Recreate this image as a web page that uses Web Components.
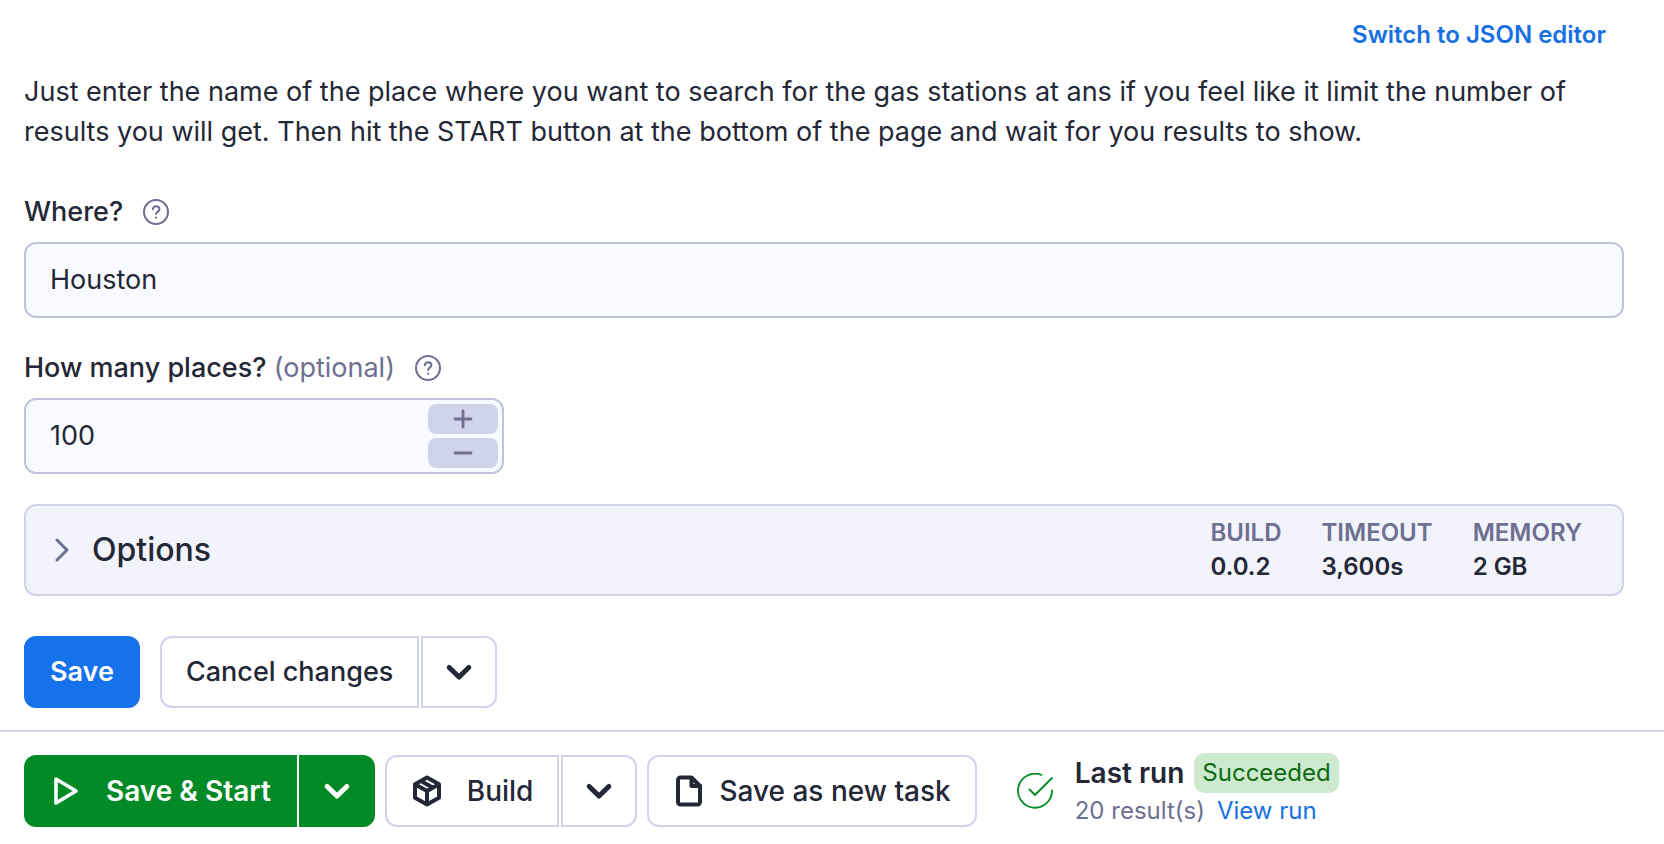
<!DOCTYPE html>
<html lang="en">
<head>
<meta charset="utf-8">
<title>Gas stations scraper - Input</title>
<style>
  :root {
    --text: #242736;
    --muted: #6e6f91;
    --link: #1670e2;
    --line: #d0d3ea;
    --field-line: #c0c3dd;
    --field-bg: #f8faff;
  }
  body {
    margin: 0;
    background: #fff;
    color: var(--text);
    font: 400 27px/40px Inter, sans-serif;
  }
</style>
</head>
<body>
<actor-input-page></actor-input-page>

<script>
const ICONS = {
  help: '<svg width="26" height="26" viewBox="0 0 26 26" fill="none" stroke="currentColor" stroke-width="2" stroke-linecap="round" stroke-linejoin="round"><circle cx="13" cy="13" r="12"/><path d="M9.8 10.200c.4-1.900 1.700-2.900 3.300-2.900 1.800 0 3.300 1.200 3.300 2.900 0 2.300-3.200 2.500-3.200 4.700"/><circle cx="13.100" cy="18.700" r=".5" stroke-width="1.200"/></svg>',
  right: '<svg width="16" height="26" viewBox="0 0 16 26" fill="none" stroke="currentColor" stroke-width="3" stroke-linecap="round" stroke-linejoin="round"><path d="M3 3 13 13 3 23"/></svg>',
  down: '<svg width="28" height="28" viewBox="0 0 28 28" fill="none" stroke="currentColor" stroke-width="5" stroke-linecap="round" stroke-linejoin="round"><path d="M4.200 9.500 14 19 23.800 9.500"/></svg>',
  play: '<svg width="28" height="32" viewBox="0 0 28 32" fill="none" stroke="currentColor" stroke-width="3.600" stroke-linejoin="round"><path d="M4 4 24 16 4 28Z"/></svg>',
  cube: '<svg width="30" height="32" viewBox="0 0 30 32" fill="none" stroke="currentColor" stroke-width="4" stroke-linecap="round" stroke-linejoin="round"><path d="M15 2.500 27 9.300v13.400L15 29.500 3 22.700V9.300ZM3.500 9.500 15 16l11.500-6.500M15 16v13M9 5.900l11.500 6.600"/></svg>',
  file: '<svg width="28" height="32" viewBox="0 0 28 32" fill="none" stroke="currentColor" stroke-width="4" stroke-linecap="round" stroke-linejoin="round"><path d="M16.500 2.500H5.500a2.500 2.500 0 0 0-2.500 2.500v22a2.500 2.500 0 0 0 2.500 2.500h17a2.500 2.500 0 0 0 2.500-2.500V11Z"/><path d="M16.500 3v8H25"/></svg>',
  check: '<svg width="36" height="36" viewBox="0 0 36 36" fill="none" stroke="currentColor" stroke-width="1.800" stroke-linecap="round" stroke-linejoin="round"><path d="M24.500 2A17 17 0 1 0 35 17.500"/><path d="M12.500 16.500 18 22 35 5"/></svg>',
  plus: '<svg width="20" height="20" viewBox="0 0 20 20" stroke="currentColor" stroke-width="2.800" stroke-linecap="round"><path d="M2 10h16M10 2v16"/></svg>',
  minus: '<svg width="20" height="20" viewBox="0 0 20 20" stroke="currentColor" stroke-width="2.800" stroke-linecap="round"><path d="M2 10h16"/></svg>'
};

class BaseElement extends HTMLElement {
  connectedCallback() {
    if (this.shadowRoot) return;
    this.attachShadow({ mode: 'open' }).innerHTML =
      `<style>*{box-sizing:border-box} svg{display:block;flex:none} button,input{font:inherit;color:inherit;margin:0} ${this.css()}</style>${this.html()}`;
    this.ready();
  }
  css() { return ''; }
  html() { return ''; }
  ready() {}
}

customElements.define('ui-icon', class extends BaseElement {
  css() { return ':host{display:inline-flex;justify-content:center;flex:none}'; }
  html() { return ICONS[this.getAttribute('name')]; }
});

customElements.define('ui-button', class extends BaseElement {
  css() {
    return `
    :host { display: block; --bg: #fff; --edge: var(--line); --ink: var(--text); --r: 12px; }
    :host([kind=primary]) { --bg: #1672eb; --edge: #1672eb; --ink: #fff; }
    :host([kind=success]) { --bg: #018a26; --edge: #018a26; --ink: #fff; }
    button {
      display: flex; align-items: center; justify-content: center;
      height: 72px; padding: 0 24px; border: 2px solid var(--edge); border-radius: var(--r);
      background: var(--bg); color: var(--ink); font-weight: 500; white-space: nowrap; cursor: pointer;
    }
    :host([kind=primary]) button, :host([kind=success]) button { font-weight: 600; }
    :host([joined=start]) button { border-radius: var(--r) 0 0 var(--r); }
    :host([joined=end]) button { border-radius: 0 var(--r) var(--r) 0; width: 76px; padding: 0; }
    ui-icon { width: 32px; margin-right: 24px; }
    :host([icon=file]) ui-icon { margin-right: 14px; }
    :host([icon=down]) ui-icon { margin: 0; }`;
  }
  html() {
    const icon = this.getAttribute('icon');
    const label = this.getAttribute('label');
    return `<button type="button"${label ? ` aria-label="${label}"` : ''}>${icon ? `<ui-icon name="${icon}"></ui-icon>` : ''}<slot></slot></button>`;
  }
});

customElements.define('split-button', class extends BaseElement {
  css() { return ':host{display:flex;gap:2px}'; }
  html() {
    const kind = this.getAttribute('kind') || 'plain';
    const icon = this.getAttribute('icon');
    return `<ui-button kind="${kind}" joined="start"${icon ? ` icon="${icon}"` : ''}><slot></slot></ui-button>
      <ui-button kind="${kind}" joined="end" icon="down" label="More actions"></ui-button>`;
  }
});

customElements.define('form-field', class extends BaseElement {
  css() {
    return `
    :host { display: block; }
    .head { display: flex; align-items: center; height: 40px; margin-bottom: 10px; }
    label { font-weight: 500; }
    .optional { color: var(--muted); font-weight: 400; }
    .help { display: flex; margin-left: 20px; padding: 0; border: 0; background: none; color: var(--muted); cursor: pointer; }
    .box {
      display: flex; height: 76px; border: 2px solid var(--field-line); border-radius: 12px;
      background: var(--field-bg);
    }
    .box.number { max-width: 480px; }
    input {
      flex: 1; min-width: 0; border: 0; border-radius: 12px; outline: 0; background: transparent;
      padding: 0 24px; appearance: textfield;
    }
    input::-webkit-inner-spin-button { appearance: none; margin: 0; }
    .steps { display: flex; flex-direction: column; gap: 4px; padding: 4px; }
    .steps button {
      flex: 1; width: 70px; display: flex; align-items: center; justify-content: center; padding: 0;
      border: 0; border-radius: 8px; background: #d0d4ea; color: var(--muted); cursor: pointer;
    }`;
  }
  html() {
    const number = this.getAttribute('type') === 'number';
    return `
      <div class="head">
        <label for="field"><slot></slot>${this.hasAttribute('optional') ? ' <span class="optional">(optional)</span>' : ''}</label>
        <button class="help" type="button" aria-label="Help"><ui-icon name="help"></ui-icon></button>
      </div>
      <div class="box${number ? ' number' : ''}">
        <input id="field" type="${number ? 'number' : 'text'}" value="${this.getAttribute('value')}">
        ${number ? `<div class="steps">
          <button type="button" data-step="up" aria-label="Increase"><ui-icon name="plus"></ui-icon></button>
          <button type="button" data-step="down" aria-label="Decrease"><ui-icon name="minus"></ui-icon></button>
        </div>` : ''}
      </div>`;
  }
  ready() {
    const input = this.shadowRoot.querySelector('input');
    this.shadowRoot.querySelectorAll('[data-step]').forEach(b =>
      b.addEventListener('click', () => b.dataset.step === 'up' ? input.stepUp() : input.stepDown()));
  }
});

customElements.define('options-panel', class extends BaseElement {
  css() {
    return `
    :host {
      display: flex; align-items: center; justify-content: space-between; height: 92px; box-sizing: border-box;
      padding: 0 40px 0 28px; border: 2px solid var(--line); border-radius: 12px; background: #f2f3fb;
    }
    button {
      display: flex; align-items: center; gap: 22px; padding: 0; border: 0; background: none;
      font-size: 32px; font-weight: 500; cursor: pointer;
    }
    ui-icon { color: var(--muted); }
    dl { display: flex; gap: 40px; margin: 0; font-size: 24px; line-height: 34px; font-weight: 600; }
    dt { color: var(--muted); }
    dd { margin: 0; }`;
  }
  html() {
    return `
      <button type="button" aria-expanded="false"><ui-icon name="right"></ui-icon>Options</button>
      <dl>
        <div><dt>BUILD</dt><dd>0.0.2</dd></div>
        <div><dt>TIMEOUT</dt><dd>3,600s</dd></div>
        <div><dt>MEMORY</dt><dd>2 GB</dd></div>
      </dl>`;
  }
});

customElements.define('run-status', class extends BaseElement {
  css() {
    return `
    :host { display: flex; align-items: center; gap: 22px; white-space: nowrap; }
    ui-icon { color: #018a26; }
    .top { display: flex; align-items: center; gap: 10px; font-weight: 600; line-height: 40px; }
    .badge { padding: 0 8px; border-radius: 10px; background: #cdeacf; color: #0f6b12; font-size: 24px; font-weight: 400; }
    .bottom { display: flex; gap: 12px; font-size: 24px; line-height: 36px; color: var(--muted); }
    a { color: var(--link); text-decoration: none; }`;
  }
  html() {
    return `
      <ui-icon name="check"></ui-icon>
      <div>
        <div class="top"><span>Last run</span><span class="badge">Succeeded</span></div>
        <div class="bottom"><span>20 result(s)</span><a href="#run">View run</a></div>
      </div>`;
  }
});

customElements.define('actor-input-page', class extends BaseElement {
  css() {
    return `
    :host { display: block; }
    main { padding: 15px 40px 22px 24px; }
    .switch { display: flex; justify-content: flex-end; padding-right: 18px; margin-bottom: 17px; }
    a { color: var(--link); font-size: 24px; font-weight: 600; text-decoration: none; }
    p { margin: 0 0 40px; }
    form-field { margin-bottom: 30px; }
    .actions { display: flex; gap: 20px; margin-top: 40px; }
    footer {
      display: flex; flex-wrap: wrap; align-items: center; gap: 10px; padding: 21px 24px 12px;
      border-top: 2px solid var(--line); font-size: 28px;
    }
    run-status { margin-left: 30px; }`;
  }
  html() {
    return `
      <main>
        <div class="switch"><a href="#json">Switch to JSON editor</a></div>
        <p>Just enter the name of the place where you want to search for the gas stations at ans if you feel like it limit the number of results you will get. Then hit the START button at the bottom of the page and wait for you results to show.</p>
        <form-field value="Houston">Where?</form-field>
        <form-field type="number" value="100" optional>How many places?</form-field>
        <options-panel></options-panel>
        <div class="actions">
          <ui-button kind="primary">Save</ui-button>
          <split-button>Cancel changes</split-button>
        </div>
      </main>
      <footer>
        <split-button kind="success" icon="play">Save &amp; Start</split-button>
        <split-button icon="cube">Build</split-button>
        <ui-button icon="file">Save as new task</ui-button>
        <run-status></run-status>
      </footer>`;
  }
});
</script>
</body>
</html>
